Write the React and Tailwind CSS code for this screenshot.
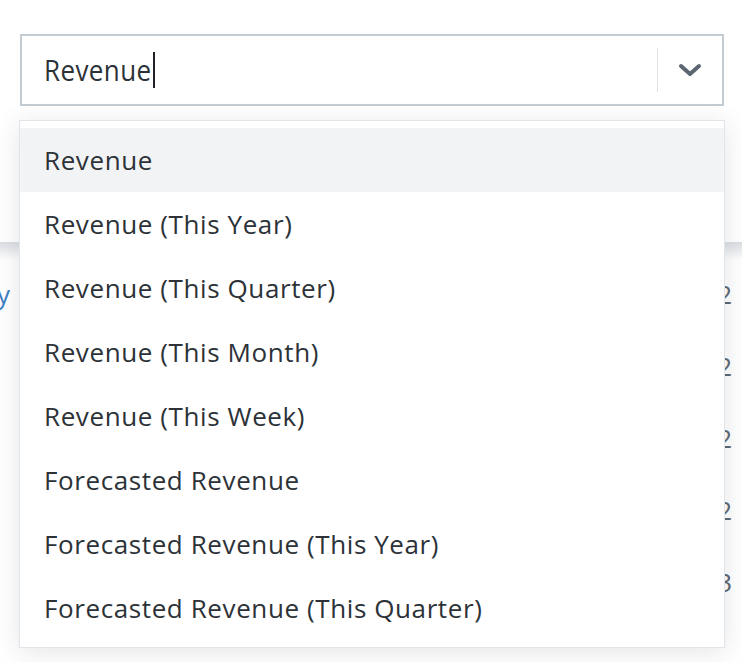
import React from "react";

const items = [
  "Revenue",
  "Revenue (This Year)",
  "Revenue (This Quarter)",
  "Revenue (This Month)",
  "Revenue (This Week)",
  "Forecasted Revenue",
  "Forecasted Revenue (This Year)",
  "Forecasted Revenue (This Quarter)",
];

const rows = ["2", "2", "2", "2", "3"];

export default function App() {
  return (
    <div className="relative w-[742px] h-[662px] overflow-hidden bg-white font-['Open_Sans',sans-serif] text-[#2c3238]">
      {/* top panel */}
      <div className="h-[242px] bg-white px-[20px] pt-[34px]">
        <div className="flex h-[72px] w-[704px] items-center border-2 border-[#c3cbd3] bg-white">
          <div className="flex flex-1 items-center pl-[22px] text-[26px] leading-none">
            <span className="inline-block scale-y-110 tracking-[0.4px]">Revenue</span>
            <span className="ml-[1px] inline-block h-[36px] w-[2px] bg-[#1e2226]" />
          </div>
          <div className="h-[44px] w-px bg-[#dfe3e7]" />
          <div className="flex w-[64px] items-center justify-center">
            <svg width="26" height="16" viewBox="0 0 26 16">
              <path d="M4 4 L13 12 L22 4" fill="none" stroke="#5b6670" strokeWidth="4" strokeLinecap="round" strokeLinejoin="round" />
            </svg>
          </div>
        </div>
      </div>
      <div className="h-[18px] bg-gradient-to-b from-[#dadde2] to-white" />
      {/* content rows under dropdown */}
      <div className="flex flex-col pt-[18px]">
        {rows.map((d, i) => (
          <div key={i} className="flex h-[72px] items-start justify-between text-[26px] leading-[32px]">
            <span className="-ml-[150px] w-[160px] text-right text-[#3f7fc4]">{i === 0 ? "Company" : ""}</span>
            <span className="mr-[10px] text-[#5f6871]">{d}</span>
          </div>
        ))}
      </div>
      {/* dropdown */}
      <div className="absolute left-[19px] top-[120px] w-[706px] border border-[#e1e4e8] bg-white py-[7px] shadow-[0_4px_24px_rgba(30,40,55,0.12)]">
        {items.map((t, i) => (
          <div
            key={t}
            className={`flex h-[64px] items-center pl-[24px] text-[26px] leading-none tracking-[0.6px] ${i === 0 ? "bg-[#f2f3f5]" : ""}`}
          >
            {t}
          </div>
        ))}
      </div>
    </div>
  );
}
